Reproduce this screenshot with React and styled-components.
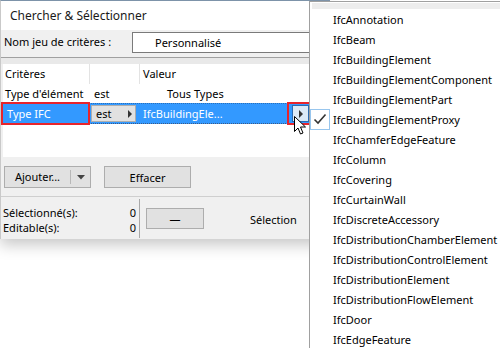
import React from "react";
import styled, { createGlobalStyle } from "styled-components";

const GlobalStyle = createGlobalStyle`
  html, body {
    margin: 0;
    padding: 0;
    background: #fff;
  }
  body {
    font-family: "Noto Sans", "Liberation Sans", sans-serif;
    font-size: 11px;
    color: #000;
  }
`;

const ifcTypes = [
  "IfcAnnotation",
  "IfcBeam",
  "IfcBuildingElement",
  "IfcBuildingElementComponent",
  "IfcBuildingElementPart",
  "IfcBuildingElementProxy",
  "IfcChamferEdgeFeature",
  "IfcColumn",
  "IfcCovering",
  "IfcCurtainWall",
  "IfcDiscreteAccessory",
  "IfcDistributionChamberElement",
  "IfcDistributionControlElement",
  "IfcDistributionElement",
  "IfcDistributionFlowElement",
  "IfcDoor",
  "IfcEdgeFeature",
];

const App = () => {
  return (
    <Screen>
      <GlobalStyle />
      <Dialog>
        <TitleBar>Chercher &amp; Sélectionner</TitleBar>
        <Body>
          <SetRow>
            <SetLabel>Nom jeu de critères :</SetLabel>
            <SetField>Personnalisé</SetField>
          </SetRow>
          <Separator />
          <Table>
            <HeaderRow>
              <HeadCell $w={87}>Critères</HeadCell>
              <HeadCell $w={50} />
              <HeadCell>Valeur</HeadCell>
            </HeaderRow>
            <Row>
              <Cell $w={89}>Type d'élément</Cell>
              <Cell $w={73}>est</Cell>
              <Cell>Tous Types</Cell>
            </Row>
            <SelectedRow>
              <Highlighted $w={89}>Type IFC</Highlighted>
              <OpButton>
                est
                <Arrow />
              </OpButton>
              <Cell $w={146} $light>IfcBuildingEle...</Cell>
              <Highlighted $w={24} $pad={3}>
                <ValueButton>
                  <Arrow />
                </ValueButton>
              </Highlighted>
            </SelectedRow>
          </Table>
          <ButtonRow>
            <SplitButton>
              <SplitLabel>Ajouter...</SplitLabel>
              <SplitCaret>
                <svg width="8" height="5" viewBox="0 0 8 5">
                  <path d="M0 0h8L4 4.5z" fill="#444" />
                </svg>
              </SplitCaret>
            </SplitButton>
            <Button>Effacer</Button>
          </ButtonRow>
          <Footer>
            <Stats>
              <StatLine>
                <span>Sélectionné(s):</span>
                <span>0</span>
              </StatLine>
              <StatLine>
                <span>Editable(s):</span>
                <span>0</span>
              </StatLine>
            </Stats>
            <FooterRight>
              <DashButton>—</DashButton>
              <SelectionLabel>Sélection</SelectionLabel>
            </FooterRight>
          </Footer>
        </Body>
      </Dialog>

      <Cursor width="13" height="20" viewBox="0 0 13 20">
        <path
          d="M0.5 0.5 L0.5 15.5 L4 12 L6.5 18 L9 17 L6.5 11 L11.5 11 Z"
          fill="#fff"
          stroke="#000"
          strokeWidth="1"
          strokeLinejoin="round"
        />
      </Cursor>

      <Menu>
        <MenuTop />
        {ifcTypes.map((t) => {
          const checked = t === "IfcBuildingElementProxy";
          return (
            <MenuItem key={t}>
              <CheckBox $on={checked}>
                {checked && (
                  <svg width="14" height="12" viewBox="0 0 14 12">
                    <path
                      d="M1.5 6.5 L5 10 L12.5 1.5"
                      fill="none"
                      stroke="#333"
                      strokeWidth="1.6"
                    />
                  </svg>
                )}
              </CheckBox>
              <MenuText>{t}</MenuText>
            </MenuItem>
          );
        })}
      </Menu>
    </Screen>
  );
};

export default App;

const Screen = styled.div`
  position: relative;
  width: 500px;
  height: 348px;
  overflow: hidden;
  background: #fff;
`;

const Dialog = styled.div`
  width: 330px;
  height: 239px;
  display: flex;
  flex-direction: column;
  border-top: 1px solid #7d93a9;
  border-left: 1px solid #c9c9c9;
  box-shadow: 0 6px 14px rgba(0, 0, 0, 0.22);
  box-sizing: border-box;
  background: #f0f0f0;
`;

const TitleBar = styled.div`
  height: 29px;
  display: flex;
  align-items: center;
  padding-left: 9px;
  background: #fff;
  font-size: 12px;
  color: #1a1a1a;
`;

const Body = styled.div`
  flex: 1;
  display: flex;
  flex-direction: column;
`;

const SetRow = styled.div`
  height: 26px;
  display: flex;
  align-items: flex-start;
  padding-top: 2px;
  box-sizing: border-box;
`;

const SetLabel = styled.div`
  width: 131px;
  padding-left: 3px;
  line-height: 20px;
  box-sizing: border-box;
`;

const SetField = styled.div`
  flex: 1;
  height: 21px;
  box-sizing: border-box;
  border: 1px solid #7a7a7a;
  background: #fff;
  padding-left: 22px;
  display: flex;
  align-items: center;
`;

const Separator = styled.div`
  height: 6px;
  border-top: 1px solid #a0a0a0;
  margin-top: 1px;
  background: #e9e9e9;
`;

const Table = styled.div`
  margin-left: 2px;
  height: 93px;
  background: #fff;
  display: flex;
  flex-direction: column;
`;

const HeaderRow = styled.div`
  height: 20px;
  display: flex;
  align-items: center;
`;

const HeadCell = styled.div`
  width: ${(p) => (p.$w ? `${p.$w}px` : "auto")};
  flex: ${(p) => (p.$w ? "none" : 1)};
  box-sizing: border-box;
  padding-left: ${(p) => (p.$w ? "2px" : "3px")};
  height: 20px;
  line-height: 19px;
  border-right: ${(p) => (p.$w ? "1px solid #e3e3e3" : "none")};
`;

const Row = styled.div`
  height: 19px;
  display: flex;
  align-items: center;
`;

const Cell = styled.div`
  width: ${(p) => (p.$w ? `${p.$w}px` : "auto")};
  flex: none;
  padding-left: 2px;
  box-sizing: border-box;
  color: ${(p) => (p.$light ? "#fff" : "#000")};
  white-space: nowrap;
`;

const SelectedRow = styled.div`
  height: 21px;
  box-sizing: border-box;
  display: flex;
  align-items: center;
  background: #3399ff;
  border-top: 1px dotted #2b6fb8;
  border-bottom: 1px dotted #3a5a88;
  margin-left: -2px;
`;

const Highlighted = styled.div`
  width: ${(p) => p.$w}px;
  height: 23px;
  box-sizing: border-box;
  border: 2px solid #e8242b;
  color: #fff;
  display: flex;
  align-items: center;
  padding-left: ${(p) => (p.$pad ? `${p.$pad}px` : "4px")};
  flex: none;
`;

const OpButton = styled.div`
  width: 45px;
  height: 17px;
  box-sizing: border-box;
  margin: 0 5px 0 1px;
  border: 1px solid #adadad;
  background: #e1e1e1;
  display: flex;
  align-items: center;
  justify-content: space-between;
  padding: 0 3px 0 4px;
`;

const Arrow = styled.span`
  width: 0;
  height: 0;
  border-top: 4px solid transparent;
  border-bottom: 4px solid transparent;
  border-left: 4px solid #333;
`;

const ValueButton = styled.div`
  width: 17px;
  height: 17px;
  box-sizing: border-box;
  border: 1px solid #2c6bb0;
  background: #dbe9f6;
  display: flex;
  align-items: center;
  justify-content: center;
  padding-left: 1px;
`;

const ButtonRow = styled.div`
  height: 40px;
  display: flex;
  align-items: center;
  gap: 13px;
  padding-left: 3px;
  padding-top: 1px;
  border-bottom: 1px solid #cfcfcf;
  box-sizing: border-box;
`;

const Button = styled.div`
  width: 87px;
  height: 22px;
  box-sizing: border-box;
  border: 1px solid #adadad;
  background: #e1e1e1;
  display: flex;
  align-items: center;
  justify-content: center;
`;

const SplitButton = styled(Button)`
  justify-content: flex-start;
`;

const SplitLabel = styled.div`
  width: 65px;
  text-align: center;
  border-right: 1px solid #b8b8b8;
  height: 14px;
  line-height: 14px;
`;

const SplitCaret = styled.div`
  flex: 1;
  display: flex;
  align-items: center;
  justify-content: center;
`;

const Footer = styled.div`
  flex: 1;
  display: flex;
  align-items: stretch;
  padding: 2px 0 1px;
`;

const Stats = styled.div`
  width: 133px;
  padding: 0 3px 0 2px;
  border-right: 1px solid #a8a8a8;
  display: flex;
  flex-direction: column;
  justify-content: center;
  padding-top: 2px;
`;

const StatLine = styled.div`
  display: flex;
  justify-content: space-between;
  line-height: 15px;
`;

const FooterRight = styled.div`
  flex: 1;
  display: flex;
  align-items: center;
  padding-left: 6px;
`;

const DashButton = styled(Button)`
  width: 58px;
  height: 21px;
`;

const SelectionLabel = styled.div`
  margin-left: 46px;
  margin-top: 2px;
`;

const Cursor = styled.svg`
  position: absolute;
  left: 294px;
  top: 116px;
`;

const Menu = styled.div`
  position: absolute;
  left: 309px;
  top: 1px;
  width: 200px;
  height: 360px;
  background: #fff;
  border: 1px solid #a0a0a0;
  box-sizing: border-box;
`;

const MenuTop = styled.div`
  height: 6px;
  margin: 1px 0 0 2px;
  background: #ededed;
`;

const MenuItem = styled.div`
  height: 20px;
  display: flex;
  align-items: center;
`;

const CheckBox = styled.div`
  width: 20px;
  height: 21px;
  box-sizing: border-box;
  border: 1px solid ${(p) => (p.$on ? "#98c6ee" : "transparent")};
  display: flex;
  align-items: center;
  justify-content: center;
`;

const MenuText = styled.div`
  padding-left: 3px;
  white-space: nowrap;
`;
